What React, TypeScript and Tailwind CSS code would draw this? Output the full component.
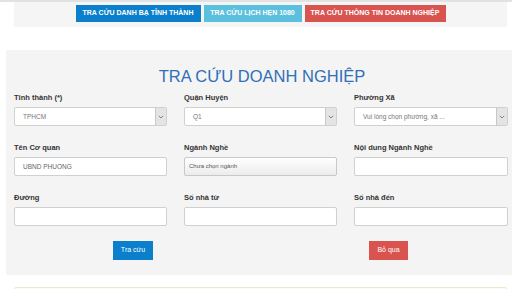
import React from "react";

const font = { fontFamily: '"Liberation Sans", Arial, sans-serif' };

function Chevron() {
  return (
    <svg width="6" height="4" viewBox="0 0 6 4" className="block">
      <path d="M0.8 0.8 L3 3 L5.2 0.8" fill="none" stroke="#777" strokeWidth="0.9" />
    </svg>
  );
}

function Select({ value }: { value: string }) {
  return (
    <div className="flex h-[19px] items-stretch rounded-[2px] border border-[#d0d0d0] bg-white">
      <div className="flex flex-1 items-center pl-[8px] text-[6.5px] text-[#777]">{value}</div>
      <div className="flex w-[11px] items-center justify-center border-l border-[#c8c8c8] bg-[#e4e4e4]">
        <Chevron />
      </div>
    </div>
  );
}

function Input({ value }: { value?: string }) {
  return (
    <div className="flex h-[19px] items-center rounded-[2px] border border-[#d0d0d0] bg-white pl-[8px] text-[6.5px] text-[#666]">
      {value}
    </div>
  );
}

function Label({ children }: { children: React.ReactNode }) {
  return <div className="mb-[4px] h-[10px] text-[7.5px] font-bold leading-[10px] text-[#333]">{children}</div>;
}

export default function App() {
  return (
    <div className="relative h-[289px] w-[512px] overflow-hidden bg-white" style={font}>
      <div className="h-[2px] bg-[#e2e2e2]" />
      <div className="ml-[14px] flex h-[25px] w-[493px] items-start justify-center gap-[3px] bg-[#f5f5f5] pt-[3px]">
        <div className="flex h-[17px] w-[125px] items-center justify-center bg-[#0b7fcb] text-[7px] font-bold text-white">
          TRA CỨU DANH BẠ TỈNH THÀNH
        </div>
        <div className="flex h-[17px] w-[98px] items-center justify-center bg-[#5bc0de] text-[7px] font-bold text-white">
          TRA CỨU LỊCH HẸN 1080
        </div>
        <div className="flex h-[17px] w-[141px] items-center justify-center bg-[#d9534f] text-[7px] font-bold text-white">
          TRA CỨU THÔNG TIN DOANH NGHIỆP
        </div>
      </div>
      <div className="ml-[6px] mt-[23px] h-[225px] w-[510px] bg-[#f4f4f4] pl-[8px] pr-[6px]">
        <div className="pt-[16px] text-center text-[16.5px] leading-[20px] text-[#2f6fb5]">TRA CỨU DOANH NGHIỆP</div>
        <div className="mt-[7px] grid grid-cols-[153px_153px_154px] gap-x-[17px] gap-y-[17px]">
          <div>
            <Label>Tỉnh thành (*)</Label>
            <Select value="TPHCM" />
          </div>
          <div>
            <Label>Quận Huyện</Label>
            <Select value="Q1" />
          </div>
          <div>
            <Label>Phường Xã</Label>
            <Select value="Vui lòng chọn phường, xã ..." />
          </div>
          <div>
            <Label>Tên Cơ quan</Label>
            <Input value="UBND PHUONG" />
          </div>
          <div>
            <Label>Ngành Nghề</Label>
            <div className="flex h-[19px] items-center rounded-[2px] border border-[#c8c8c8] bg-gradient-to-b from-white to-[#ececec] pl-[4px] text-[6px] text-[#555]">
              Chưa chọn ngành
            </div>
          </div>
          <div>
            <Label>Nội dung Ngành Nghề</Label>
            <Input />
          </div>
          <div>
            <Label>Đường</Label>
            <Input />
          </div>
          <div>
            <Label>Số nhà từ</Label>
            <Input />
          </div>
          <div>
            <Label>Số nhà đến</Label>
            <Input />
          </div>
        </div>
        <div className="mt-[15px] flex">
          <div className="ml-[99px] flex h-[19px] w-[40px] items-center justify-center bg-[#0b7fcb] text-[7px] text-white">
            Tra cứu
          </div>
          <div className="ml-[216px] flex h-[19px] w-[39px] items-center justify-center bg-[#d9534f] text-[7px] text-white">
            Bỏ qua
          </div>
        </div>
      </div>
      <div className="ml-[14px] mt-[12px] h-[20px] w-[493px] rounded-[2px] border border-[#e6ecc8] bg-[#fbfdf0]" />
    </div>
  );
}
